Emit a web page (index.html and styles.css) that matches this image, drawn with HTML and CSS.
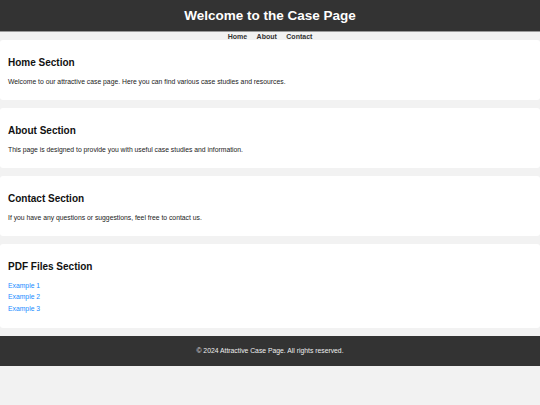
FILE: index.html
```html
<!DOCTYPE html>
<html lang="en">
<head>
<meta charset="utf-8">
<title>Attractive Case Page</title>
<link rel="stylesheet" href="styles.css">
</head>
<body>
<header class="site-header">
  <h1 class="site-title">Welcome to the Case Page</h1>
</header>
<nav class="site-nav">
  <a href="#home">Home</a>
  <a href="#about">About</a>
  <a href="#contact">Contact</a>
</nav>
<main class="content">
  <section class="card" id="home">
    <h2 class="card-title">Home Section</h2>
    <p class="card-text">Welcome to our attractive case page. Here you can find various case studies and resources.</p>
  </section>
  <section class="card" id="about">
    <h2 class="card-title">About Section</h2>
    <p class="card-text">This page is designed to provide you with useful case studies and information.</p>
  </section>
  <section class="card" id="contact">
    <h2 class="card-title">Contact Section</h2>
    <p class="card-text">If you have any questions or suggestions, feel free to contact us.</p>
  </section>
  <section class="card" id="pdf">
    <h2 class="card-title">PDF Files Section</h2>
    <ul class="file-list">
      <li><a href="#">Example 1</a></li>
      <li><a href="#">Example 2</a></li>
      <li><a href="#">Example 3</a></li>
    </ul>
  </section>
</main>
<footer class="site-footer">
  <p class="footer-text">© 2024 Attractive Case Page. All rights reserved.</p>
</footer>
</body>
</html>
```
FILE: styles.css
```css
html, body {
  margin: 0;
  padding: 0;
}
body {
  background: #f2f2f2;
  font-family: "Liberation Sans", Arial, sans-serif;
  color: #222;
}
.site-header {
  background: #333;
  height: 32px;
  display: flex;
  align-items: center;
  justify-content: center;
  border-bottom: 1px solid #9a9a9a;
  box-sizing: border-box;
}
.site-title {
  margin: 0;
  color: #fff;
  font-size: 13.5px;
  font-weight: bold;
}
.site-nav {
  height: 8px;
  display: flex;
  justify-content: center;
  align-items: center;
  gap: 9.5px;
}
.site-nav a {
  color: #333;
  text-decoration: none;
  font-weight: bold;
  font-size: 7px;
}
.content {
  display: flex;
  flex-direction: column;
  gap: 8px;
}
.card {
  background: #fff;
  border-radius: 3px;
  padding: 8px;
}
.card-title {
  margin: 9.3px 0 9.3px;
  font-size: 10px;
  font-weight: bold;
  line-height: 11.5px;
  color: #111;
}
.card-text {
  margin: 0 0 6px;
  font-size: 6.8px;
  line-height: 7.8px;
}
.file-list {
  list-style: none;
  margin: 0 0 7px;
  padding: 0;
}
.file-list li {
  font-size: 6.8px;
  line-height: 7.8px;
  margin-bottom: 3.7px;
}
.file-list li:last-child {
  margin-bottom: 0;
}
.file-list a {
  color: #1a8cff;
  text-decoration: none;
}
.site-footer {
  margin-top: 8px;
  background: #333;
  height: 30px;
  display: flex;
  align-items: center;
  justify-content: center;
}
.footer-text {
  margin: 0;
  color: #eee;
  font-size: 6.8px;
}
```
